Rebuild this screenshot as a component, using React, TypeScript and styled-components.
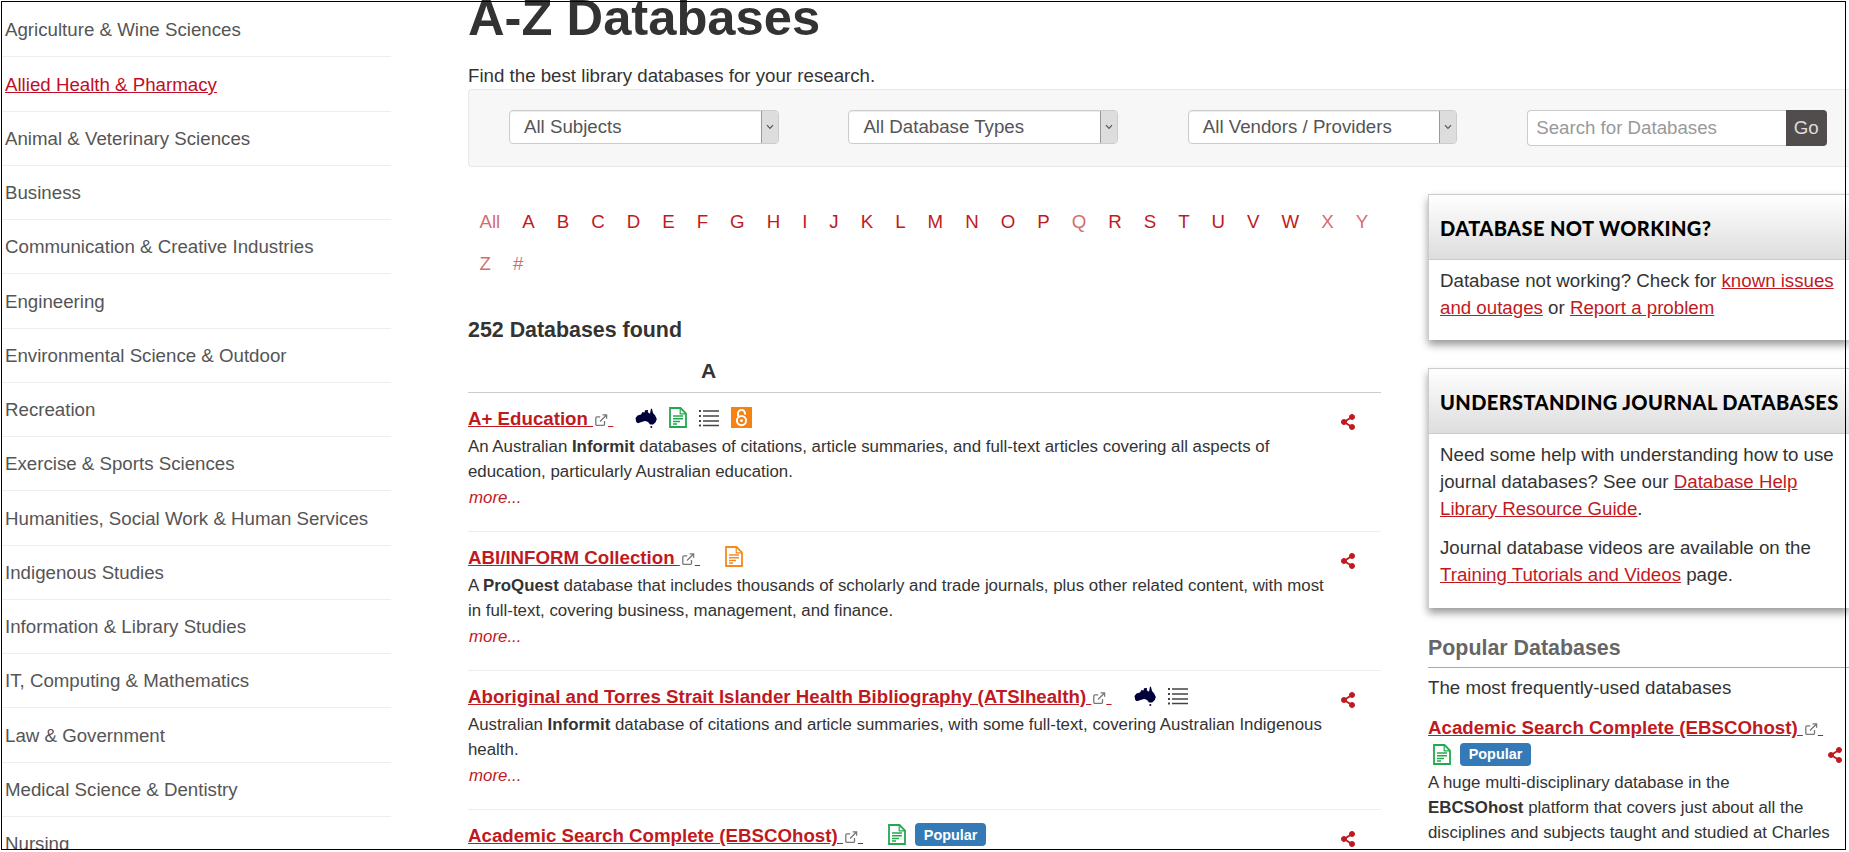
import React from "react";
import styled, { createGlobalStyle } from "styled-components";
import { FaShareAlt } from "react-icons/fa";

const RED = "#bf1a1f";

const Global = createGlobalStyle`
  html, body { margin: 0; padding: 0; background: #fff; overflow: hidden; }
  body { font-family: "Liberation Sans", Arial, sans-serif; color: #333; }
  * { box-sizing: border-box; }
`;

const Shell = styled.div`
  position: relative;
  width: 1849px;
  height: 849px;
  overflow: hidden;
  display: flex;
  padding-left: 2px;
`;
const Frame = styled.div`
  position: absolute;
  left: 1px;
  top: 1px;
  width: 1845px;
  height: 849px;
  border: 1px solid #000;
  pointer-events: none;
`;
const Sidebar = styled.nav`
  width: 389px;
  flex: none;
  padding-top: 3px;
`;
const SideRow = styled.a<{ $active?: boolean }>`
  display: block;
  height: 54.25px;
  padding: 13.4px 0 0 3px;
  font-size: 18.7px;
  line-height: 27px;
  color: ${(p) => (p.$active ? "#c00d27" : "#555")};
  text-decoration: ${(p) => (p.$active ? "underline" : "none")};
  border-bottom: 1px solid #eee;
`;
const Main = styled.main`
  margin-left: 77px;
  width: 1381px;
  flex: none;
`;
const Title = styled.h1`
  margin: -17.5px 0 0;
  font-size: 50.7px;
  line-height: 70px;
  font-weight: 700;
  color: #333;
`;
const Lead = styled.p`
  margin: 9.5px 0 0;
  font-size: 18.7px;
  line-height: 27px;
  height: 27px;
  color: #333;
`;
const FilterBar = styled.form`
  margin-top: 0;
  height: 78px;
  padding: 20px 0 0 40px;
  display: flex;
  gap: 69.9px;
  align-items: flex-start;
  background: #f7f7f7;
  border: 1px solid #e7e7e7;
  border-right: 0;
  border-radius: 4px 0 0 4px;
`;
const SelectBox = styled.div`
  width: 269.5px;
  height: 34px;
  display: flex;
  background: #fff;
  border: 1px solid #ccc;
  border-radius: 4px;
  box-shadow: inset 0 1px 1px rgba(0, 0, 0, 0.08);
  overflow: hidden;
`;
const SelectText = styled.span`
  flex: 1;
  padding-left: 14px;
  font-size: 18.7px;
  line-height: 31px;
  color: #555;
`;
const SelectArrow = styled.span`
  width: 17px;
  display: flex;
  align-items: center;
  justify-content: center;
  background: #ddd;
  border-left: 1px solid #999;
`;
const SearchGroup = styled.div`
  width: 299.5px;
  height: 36px;
  display: flex;
`;
const SearchInput = styled.input`
  flex: 1;
  min-width: 0;
  height: 36px;
  padding: 0 8px;
  border: 1px solid #ccc;
  border-right: 0;
  border-radius: 4px 0 0 4px;
  font: 18.7px "Liberation Sans", Arial, sans-serif;
  color: #555;
  background: #fff;
  &::placeholder { color: #999; opacity: 1; }
`;
const GoButton = styled.button`
  width: 41px;
  height: 36px;
  padding: 0;
  border: 0;
  border-radius: 0 4px 4px 0;
  background: #524d4d;
  color: #ddd;
  font: 18.7px "Liberation Sans", Arial, sans-serif;
`;
const Columns = styled.div`
  margin-top: 27px;
  display: flex;
  gap: 47px;
  align-items: flex-start;
`;
const LeftCol = styled.section`
  width: 913px;
  flex: none;
`;
const RightCol = styled.aside`
  width: 421px;
  flex: none;
`;
const Letters = styled.div`
  margin-top: 6.6px;
  display: flex;
  flex-wrap: wrap;
  padding-left: 0.5px;
`;
const Letter = styled.a<{ $off?: boolean }>`
  padding: 7.5px 11px;
  font-size: 18.7px;
  line-height: 27px;
  color: ${RED};
  opacity: ${(p) => (p.$off ? 0.65 : 1)};
`;
const Found = styled.h2`
  margin: 31px 0 0;
  font-size: 21.4px;
  line-height: 28px;
  font-weight: 700;
  color: #333;
`;
const GroupLetter = styled.h3`
  margin: 13px 0 0;
  padding: 0 0 7px 233px;
  font-size: 21px;
  line-height: 28px;
  font-weight: 700;
  color: #333;
  border-bottom: 1px solid #ccc;
`;
const Item = styled.article`
  height: 139px;
  padding-top: 12px;
  display: flex;
  border-bottom: 1px solid #eee;
`;
const ItemBody = styled.div`
  width: 862px;
  flex: none;
`;
const TitleRow = styled.div`
  display: flex;
  flex-wrap: wrap;
  align-items: center;
  min-height: 29px;
`;
const TitleLink = styled.a`
  font-size: 18.7px;
  line-height: 28px;
  font-weight: 700;
  color: ${RED};
  text-decoration: underline;
`;
const ExtSvg = styled.svg`
  width: 14px;
  height: 14px;
  margin-left: 1px;
  vertical-align: -2px;
`;
const Icons = styled.span<{ $left?: number }>`
  display: flex;
  align-items: center;
  gap: 12px;
  margin-left: ${(p) => p.$left ?? 22}px;
  margin-top: -3px;
`;
const WrappedIcons = styled(Icons)`
  margin-top: 0.5px;
  margin-bottom: 3.7px;
`;
const Desc = styled.p`
  margin: 0;
  font-size: 16.85px;
  line-height: 25px;
  color: #333;
`;
const More = styled.a`
  display: block;
  margin: 1px 0 0 1px;
  font-size: 16.85px;
  line-height: 26px;
  font-style: italic;
  color: ${RED};
`;
const Share = styled.span`
  margin: 9px 0 0 10px;
  color: ${RED};
  font-size: 16px;
  line-height: 0;
`;
const Badge = styled.span`
  height: 23px;
  width: 71px;
  margin-left: -3px;
  display: flex;
  align-items: center;
  justify-content: center;
  border-radius: 4px;
  background: #337ab7;
  color: #fff;
  font-size: 14.4px;
  font-weight: 700;
`;
const Card = styled.div`
  margin-bottom: 28px;
  background: #fff;
  border-top: 1px solid #ccc;
  border-left: 1px solid #ccc;
  box-shadow: 0 5px 8px rgba(0, 0, 0, 0.4);
`;
const CardHead = styled.h3`
  margin: 0;
  height: 65px;
  padding: 2px 0 0 11px;
  display: flex;
  align-items: center;
  font-family: Lato, "Liberation Sans", sans-serif;
  font-size: 20px;
  font-weight: 900;
  letter-spacing: 0.4px;
  white-space: nowrap;
  color: #000;
  background: linear-gradient(#fff, #ddd);
  border-bottom: 1px solid #ccc;
`;
const CardBody = styled.div`
  padding: 6.5px 0 19.5px 11px;
  font-size: 18.7px;
  line-height: 27px;
  color: #333;
`;
const CardPara = styled.p`
  margin: 0 0 12.5px;
  &:last-child { margin-bottom: 0; }
`;
const TextLink = styled.a`
  color: ${RED};
  text-decoration: underline;
`;
const PopularHead = styled.h3`
  margin: -1.2px 0 0;
  padding-bottom: 5px;
  font-size: 21.4px;
  line-height: 28px;
  font-weight: 700;
  color: #666;
  border-bottom: 1px solid #aaa;
`;
const PopularLead = styled.p`
  margin: 6px 0 13px;
  font-size: 18.7px;
  line-height: 27px;
  color: #333;
`;
const PopularItem = styled.div`
  display: flex;
`;
const PopularBody = styled.div`
  width: 403px;
  flex: none;
`;
const PopularShare = styled.span`
  margin: 33px 0 0 -4px;
  color: ${RED};
  font-size: 16px;
  line-height: 0;
`;

const Ext = () => (
  <ExtSvg viewBox="0 0 14 14" fill="none" stroke="#777" strokeWidth="1.3">
    <path d="M10.5 8v3.2a1.2 1.2 0 0 1-1.2 1.2H3a1.2 1.2 0 0 1-1.2-1.2V5A1.2 1.2 0 0 1 3 3.8h3.2" />
    <path d="M6 8.5 12 2.5M8.6 1.8h4v4" />
  </ExtSvg>
);

const Aus = () => (
  <svg width="22" height="21" viewBox="0 0 22 21" fill="#00003a">
    <path d="M0.5 11 2.5 8.5 6 7.5 7.5 5 9.5 5.5 10 3.2 13 3 12.8 5.2 15 6.8 16 1.5 17 2 18 6 20.2 8.5 21.8 12 20.8 15 18.2 17.5 15 17.5 13.5 15.5 12 14.5 10 14 6.5 15 3 16.2 1.2 15Z" />
    <circle cx="16.3" cy="20" r="1" />
  </svg>
);

const Doc = ({ color }: { color: string }) => (
  <svg width="18" height="21" viewBox="0 0 18 21" fill="none" stroke={color}>
    <path d="M1 1h10.5L17 6.5V20H1Z" strokeWidth="1.8" />
    <path d="M11.2 1v5.8H17" strokeWidth="1.2" />
    <path d="M4 9h10M4 11.8h10M4 14.6h7M4 17h4" strokeWidth="1.5" />
  </svg>
);

const ListIcon = () => (
  <svg width="20" height="21" viewBox="0 0 20 21" stroke="#444" strokeWidth="1.4" fill="#444">
    <path d="M4 4h16M4 9h16M4 14h16M4 18.5h16" />
    <path d="M0 3h2v2H0zM0 8h2v2H0zM0 13h2v2H0zM0 17.5h2v2H0z" stroke="none" />
  </svg>
);

const OpenAccess = () => (
  <svg width="21" height="21" viewBox="0 0 21 21">
    <rect width="21" height="21" fill="#f68212" />
    <circle cx="10.5" cy="13.6" r="4.6" fill="none" stroke="#fff" strokeWidth="2" />
    <circle cx="10.5" cy="13.6" r="1.4" fill="#fff" />
    <path d="M7 9.5V6.6a3.5 3.5 0 0 1 7-.2v1.2" fill="none" stroke="#fff" strokeWidth="2" />
  </svg>
);

const Chevron = () => (
  <svg width="8" height="6" viewBox="0 0 8 6" fill="none" stroke="#555" strokeWidth="1.2">
    <path d="M1 1.2 4 4.4 7 1.2" />
  </svg>
);

const subjects = [
  "Agriculture & Wine Sciences",
  "Allied Health & Pharmacy",
  "Animal & Veterinary Sciences",
  "Business",
  "Communication & Creative Industries",
  "Engineering",
  "Environmental Science & Outdoor",
  "Recreation",
  "Exercise & Sports Sciences",
  "Humanities, Social Work & Human Services",
  "Indigenous Studies",
  "Information & Library Studies",
  "IT, Computing & Mathematics",
  "Law & Government",
  "Medical Science & Dentistry",
  "Nursing",
];

const letters = "All A B C D E F G H I J K L M N O P Q R S T U V W X Y Z #".split(" ");
const offLetters = ["All", "Q", "X", "Y", "Z", "#"];

const GREEN = "#22a94f";
const ORANGE = "#f68a1f";

const App = () => (
  <>
    <Global />
    <Shell>
      <Sidebar>
        {subjects.map((s, i) => (
          <SideRow key={s} $active={i === 1}>{s}</SideRow>
        ))}
      </Sidebar>
      <Main>
        <Title>A-Z Databases</Title>
        <Lead>Find the best library databases for your research.</Lead>
        <FilterBar>
          {["All Subjects", "All Database Types", "All Vendors / Providers"].map((t) => (
            <SelectBox key={t}>
              <SelectText>{t}</SelectText>
              <SelectArrow><Chevron /></SelectArrow>
            </SelectBox>
          ))}
          <SearchGroup>
            <SearchInput placeholder="Search for Databases" />
            <GoButton type="button">Go</GoButton>
          </SearchGroup>
        </FilterBar>
        <Columns>
          <LeftCol>
            <Letters>
              {letters.map((l) => (
                <Letter key={l} $off={offLetters.includes(l)}>{l}</Letter>
              ))}
            </Letters>
            <Found>252 Databases found</Found>
            <GroupLetter>A</GroupLetter>

            <Item>
              <ItemBody>
                <TitleRow>
                  <TitleLink>A+ Education <Ext />{"\u00A0"}</TitleLink>
                  <Icons><Aus /><Doc color={GREEN} /><ListIcon /><OpenAccess /></Icons>
                </TitleRow>
                <Desc>An Australian <b>Informit</b> databases of citations, article summaries, and full-text articles covering all aspects of education, particularly Australian education.</Desc>
                <More>more...</More>
              </ItemBody>
              <Share><FaShareAlt /></Share>
            </Item>
            <Item>
              <ItemBody>
                <TitleRow>
                  <TitleLink>ABI/INFORM Collection <Ext />{"\u00A0"}</TitleLink>
                  <Icons $left={25}><Doc color={ORANGE} /></Icons>
                </TitleRow>
                <Desc>A <b>ProQuest</b> database that includes thousands of scholarly and trade journals, plus other related content, with most in full-text, covering business, management, and finance.</Desc>
                <More>more...</More>
              </ItemBody>
              <Share><FaShareAlt /></Share>
            </Item>
            <Item>
              <ItemBody>
                <TitleRow>
                  <TitleLink>Aboriginal and Torres Strait Islander Health Bibliography (ATSIhealth) <Ext />{"\u00A0"}</TitleLink>
                  <Icons><Aus /><ListIcon /></Icons>
                </TitleRow>
                <Desc>Australian <b>Informit</b> database of citations and article summaries, with some full-text, covering Australian Indigenous health.</Desc>
                <More>more...</More>
              </ItemBody>
              <Share><FaShareAlt /></Share>
            </Item>
            <Item>
              <ItemBody>
                <TitleRow>
                  <TitleLink>Academic Search Complete (EBSCOhost) <Ext />{"\u00A0"}</TitleLink>
                  <Icons $left={25}><Doc color={GREEN} /><Badge>Popular</Badge></Icons>
                </TitleRow>
              </ItemBody>
              <Share><FaShareAlt /></Share>
            </Item>
          </LeftCol>
          <RightCol>
            <Card>
              <CardHead>DATABASE NOT WORKING?</CardHead>
              <CardBody>
                <CardPara>Database not working? Check for <TextLink>known issues and outages</TextLink> or <TextLink>Report a problem</TextLink></CardPara>
              </CardBody>
            </Card>
            <Card>
              <CardHead>UNDERSTANDING JOURNAL DATABASES</CardHead>
              <CardBody>
                <CardPara>Need some help with understanding how to use journal databases? See our <TextLink>Database Help Library Resource Guide</TextLink>.</CardPara>
                <CardPara>Journal database videos are available on the <TextLink>Training Tutorials and Videos</TextLink> page.</CardPara>
              </CardBody>
            </Card>
            <PopularHead>Popular Databases</PopularHead>
            <PopularLead>The most frequently-used databases</PopularLead>
            <PopularItem>
              <PopularBody>
                <TitleRow>
                  <TitleLink>Academic Search Complete (EBSCOhost) <Ext />{"\u00A0"}</TitleLink>
                  <WrappedIcons $left={5}><Doc color={GREEN} /><Badge>Popular</Badge></WrappedIcons>
                </TitleRow>
                <Desc>A huge multi-disciplinary database in the<br /><b>EBCSOhost</b> platform that covers just about all the disciplines and subjects taught and studied at Charles Sturt University.</Desc>
              </PopularBody>
              <PopularShare><FaShareAlt /></PopularShare>
            </PopularItem>
          </RightCol>
        </Columns>
      </Main>
    </Shell>
    <Frame />
  </>
);

export default App;
